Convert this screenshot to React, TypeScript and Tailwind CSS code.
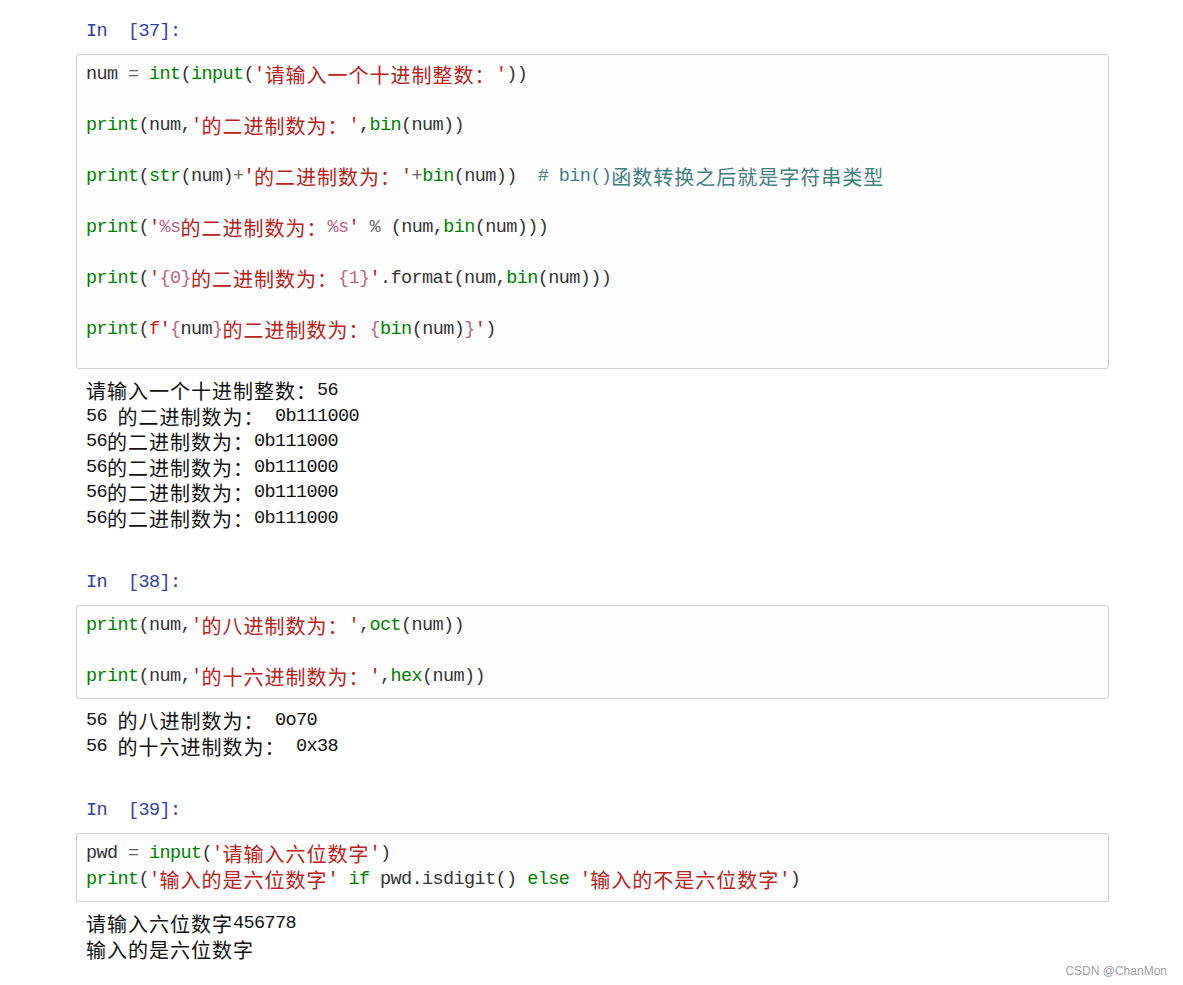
import React from "react"

type Tok = [string, string]

const C = {
  g: "text-[#008000]",
  s: "text-[#ba2121]",
  n: "text-[#333333]",
  o: "text-[#666666]",
  c: "text-[#408080]",
  i: "text-[#bb6688]",
  k: "text-[#111111]",
}

const CJK = /([\u3000-\u303f\u4e00-\u9fff\uff00-\uffef]+)/

// split text so latin goes in a narrow mono and CJK in a full-width face
function Runs({ text, color }: { text: string; color: string }) {
  const parts = text.split(CJK).filter((p) => p !== "")
  return (
    <>
      {parts.map((p, i) =>
        CJK.test(p) ? (
          <span key={i} className={`${color} font-['Noto_Sans_CJK_SC',sans-serif] text-[20px] leading-[24px] tracking-[1px]`}>
            {p}
          </span>
        ) : (
          <span key={i} className={`${color} font-['Liberation_Mono','Noto_Sans_CJK_SC',monospace] text-[18.5px] leading-[24px] tracking-[-0.6px]`}>
            {p}
          </span>
        ),
      )}
    </>
  )
}

function Line({ toks }: { toks: Tok[] }) {
  return (
    <div className="flex h-[25.5px] items-center whitespace-pre">
      {toks.map(([c, t], i) => (
        <Runs key={i} text={t} color={c} />
      ))}
    </div>
  )
}

const blank: Tok[] = []

function Prompt({ n }: { n: number }) {
  return (
    <div className="pl-[10px]">
      <Line toks={[["text-[#303f9f]", `In  [${n}]:`]]} />
    </div>
  )
}

function CodeBox({ lines, pb }: { lines: Tok[][]; pb: string }) {
  return (
    <div className={`mt-[9px] rounded-[3px] border border-[#cfcfcf] bg-[#fdfdfd] pl-[9px] pt-[8px] ${pb}`}>
      {lines.map((l, i) => (
        <Line key={i} toks={l} />
      ))}
    </div>
  )
}

function Output({ lines }: { lines: string[] }) {
  return (
    <div className="mt-[10px] pl-[10px]">
      {lines.map((l, i) => (
        <Line key={i} toks={[[C.k, l]]} />
      ))}
    </div>
  )
}

const cell1: Tok[][] = [
  [[C.n, "num "], [C.o, "="], [C.n, " "], [C.g, "int"], [C.n, "("], [C.g, "input"], [C.n, "("], [C.s, "'请输入一个十进制整数：'"], [C.n, "))"]],
  blank,
  [[C.g, "print"], [C.n, "(num,"], [C.s, "'的二进制数为：'"], [C.n, ","], [C.g, "bin"], [C.n, "(num))"]],
  blank,
  [[C.g, "print"], [C.n, "("], [C.g, "str"], [C.n, "(num)"], [C.o, "+"], [C.s, "'的二进制数为：'"], [C.o, "+"], [C.g, "bin"], [C.n, "(num))  "], [C.c, "# bin()函数转换之后就是字符串类型"]],
  blank,
  [[C.g, "print"], [C.n, "("], [C.s, "'"], [C.i, "%s"], [C.s, "的二进制数为："], [C.i, "%s"], [C.s, "'"], [C.n, " "], [C.o, "%"], [C.n, " (num,"], [C.g, "bin"], [C.n, "(num)))"]],
  blank,
  [[C.g, "print"], [C.n, "("], [C.s, "'"], [C.i, "{0}"], [C.s, "的二进制数为："], [C.i, "{1}"], [C.s, "'"], [C.n, ".format(num,"], [C.g, "bin"], [C.n, "(num)))"]],
  blank,
  [[C.g, "print"], [C.n, "("], [C.s, "f'"], [C.i, "{"], [C.n, "num"], [C.i, "}"], [C.s, "的二进制数为："], [C.i, "{"], [C.g, "bin"], [C.n, "(num)"], [C.i, "}"], [C.s, "'"], [C.n, ")"]],
]

const cell2: Tok[][] = [
  [[C.g, "print"], [C.n, "(num,"], [C.s, "'的八进制数为：'"], [C.n, ","], [C.g, "oct"], [C.n, "(num))"]],
  blank,
  [[C.g, "print"], [C.n, "(num,"], [C.s, "'的十六进制数为：'"], [C.n, ","], [C.g, "hex"], [C.n, "(num))"]],
]

const cell3: Tok[][] = [
  [[C.n, "pwd "], [C.o, "="], [C.n, " "], [C.g, "input"], [C.n, "("], [C.s, "'请输入六位数字'"], [C.n, ")"]],
  [[C.g, "print"], [C.n, "("], [C.s, "'输入的是六位数字'"], [C.n, " "], [C.g, "if"], [C.n, " pwd.isdigit() "], [C.g, "else"], [C.n, " "], [C.s, "'输入的不是六位数字'"], [C.n, ")"]],
]

export default function App() {
  return (
    <div className="relative min-h-screen w-full bg-white">
      <div className="ml-[76px] w-[1033px] pt-[19px]">
        <Prompt n={37} />
        <CodeBox lines={cell1} pb="pb-[24.5px]" />
        <Output
          lines={[
            "请输入一个十进制整数：56",
            "56 的二进制数为： 0b111000",
            "56的二进制数为：0b111000",
            "56的二进制数为：0b111000",
            "56的二进制数为：0b111000",
            "56的二进制数为：0b111000",
          ]}
        />

        <div className="mt-[38.5px]">
          <Prompt n={38} />
          <CodeBox lines={cell2} pb="pb-[7.5px]" />
          <Output lines={["56 的八进制数为： 0o70", "56 的十六进制数为： 0x38"]} />
        </div>

        <div className="mt-[38.5px]">
          <Prompt n={39} />
          <CodeBox lines={cell3} pb="pb-[8px]" />
          <Output lines={["请输入六位数字456778", "输入的是六位数字"]} />
        </div>
      </div>
      <div className="absolute right-[16px] top-[962px] font-['Liberation_Sans',sans-serif] text-[12px] text-[#a0a0a0]">
        CSDN @ChanMon
      </div>
    </div>
  )
}
